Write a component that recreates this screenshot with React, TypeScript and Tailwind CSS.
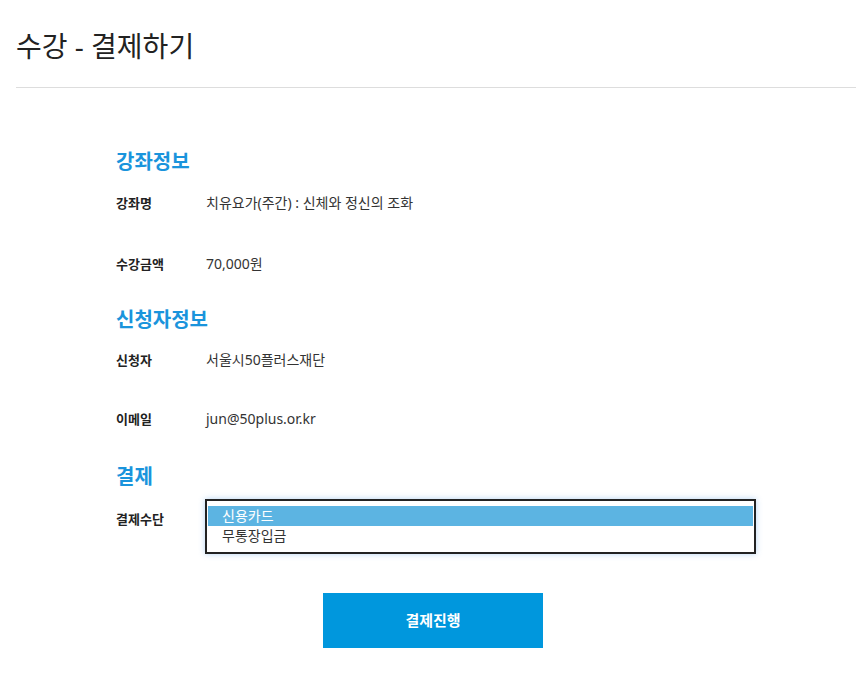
import { useState } from "react";

const font = { fontFamily: '"Noto Sans", "Noto Sans CJK KR", sans-serif' };

const Row = ({ label, value, className = "" }: { label: string; value: string; className?: string }) => (
  <div className={`flex items-center h-[20px] ${className}`}>
    <div className="w-[90px] pt-[3px] text-[13px] font-bold text-[#222]">{label}</div>
    <div className="text-[14px] text-[#333]">{value}</div>
  </div>
);

const Heading = ({ children, className = "" }: { children: string; className?: string }) => (
  <h3 className={`text-[20px] leading-[30px] font-bold text-[#1a94dc] ${className}`}>{children}</h3>
);

const App = () => {
  const methods: string[] = ["신용카드", "무통장입금"];
  const [selected, setSelected] = useState(0);

  return (
    <div className="w-full min-h-[674px] bg-white" style={font}>
      {/* Title */}
      <h2 className="pl-4 pt-[26px] text-[28px] leading-[40px] text-[#222]">수강 - 결제하기</h2>
      <div className="ml-4 mr-1 mt-[21px] h-px bg-[#dddddd]" />

      <div className="ml-[116px] w-[640px]">
        <Heading className="mt-[59px]">강좌정보</Heading>
        <Row label="강좌명" value="치유요가(주간) : 신체와 정신의 조화" className="mt-[15px]" />
        <Row label="수강금액" value="70,000원" className="mt-[41px]" />

        <Heading className="mt-[32px]">신청자정보</Heading>
        <Row label="신청자" value="서울시50플러스재단" className="mt-[14px]" />
        <Row label="이메일" value="jun@50plus.or.kr" className="mt-[39px]" />

        <Heading className="mt-[34px]">결제</Heading>
        <div className="flex mt-[7px]">
          <div className="w-[89px] pt-[10px] text-[13px] font-bold text-[#222] leading-[20px]">결제수단</div>
          <div className="w-[551px] h-[55px] border-2 border-[#222] bg-white pt-[5px] px-px shadow-[0_0_6px_rgba(90,160,230,0.45)]">
            {methods.map((m, idx) => (
              <div
                key={idx}
                onClick={() => setSelected(idx)}
                className={`h-[20px] leading-[20px] pl-[14px] text-[14px] cursor-pointer ${
                  selected === idx ? "bg-[#5cb4e2] text-white" : "text-[#333]"
                }`}
              >
                {m}
              </div>
            ))}
          </div>
        </div>

        <button className="mt-[39px] ml-[207px] w-[220px] h-[55px] bg-[#0097dd] text-white text-[15px] font-bold">
          결제진행
        </button>
      </div>
    </div>
  );
};

export default App;
